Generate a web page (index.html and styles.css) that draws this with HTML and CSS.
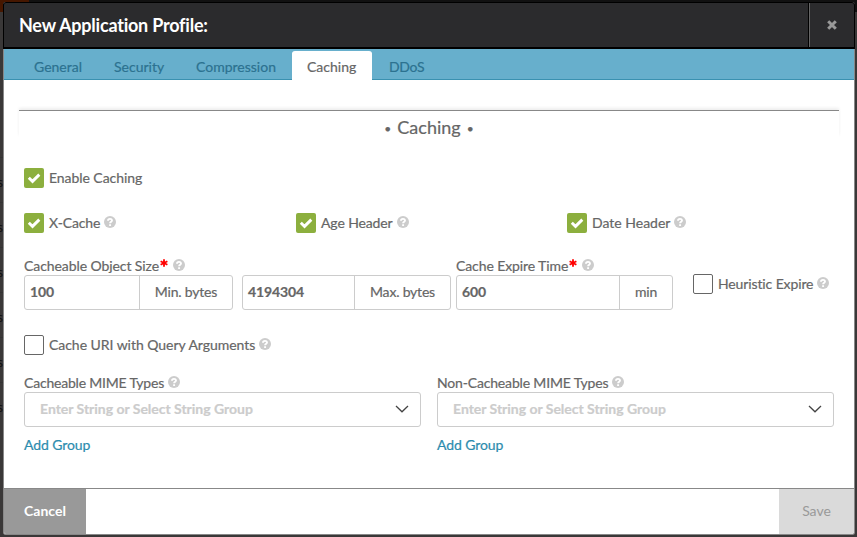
FILE: index.html
```html
<!DOCTYPE html>
<html lang="en">
<head>
<meta charset="utf-8">
<title>New Application Profile</title>
<link rel="stylesheet" href="styles.css">
</head>
<body>
<svg class="defs" aria-hidden="true">
  <symbol id="help" viewBox="0 0 12 12"><circle cx="6" cy="6" r="6" fill="#ccc"/><path d="M4 4.7C4 2.4 8 2.3 8 4.6C8 5.8 6.1 5.8 6.1 7.3M6.1 8.3V10" fill="none" stroke="#fff" stroke-width="1.9"/></symbol>
  <symbol id="check" viewBox="0 0 20 20"><path d="M4.8 9.8L8.5 13.4L15.3 6.6" fill="none" stroke="#fff" stroke-width="2.9"/></symbol>
  <symbol id="star" viewBox="0 0 8 8"><path d="M4 .3V7.7M.6 2.2L7.4 5.8M7.4 2.2L.6 5.8" stroke="#f00" stroke-width="1.8"/></symbol>
  <symbol id="chevron" viewBox="0 0 14 8"><path d="M1 1L7 6.8L13 1" fill="none" stroke="#444" stroke-width="1.3"/></symbol>
</svg>
<div class="backdrop"><div class="topstrip"></div><ul class="rows"><li>s</li><li>s</li><li>s</li><li>s</li><li>s</li><li>s</li></ul></div>
<div class="modal">
  <header class="header">
    <h1>New Application Profile:</h1>
    <button class="close" aria-label="Close"><svg width="10" height="10" viewBox="0 0 10 10"><path d="M1.2 1.2L8.8 8.8M8.8 1.2L1.2 8.8" stroke="#999" stroke-width="3"/></svg></button>
  </header>
  <nav class="tabs">
    <a class="tab general">General</a><a class="tab security">Security</a><a class="tab compression">Compression</a><a class="tab active">Caching</a><a class="tab ddos">DDoS</a>
  </nav>
  <main class="content">
    <div class="section"><h2><small>•</small>Caching<small>•</small></h2></div>
    <div class="check-row first"><label class="option"><i class="box on"><svg><use href="#check"/></svg></i><span class="enable">Enable Caching</span></label></div>
    <div class="check-row thirds">
      <label class="option"><i class="box on"><svg><use href="#check"/></svg></i><span class="xcache">X-Cache</span><svg class="help"><use href="#help"/></svg></label>
      <label class="option"><i class="box on"><svg><use href="#check"/></svg></i><span class="age">Age Header</span><svg class="help"><use href="#help"/></svg></label>
      <label class="option"><i class="box on"><svg><use href="#check"/></svg></i><span class="date">Date Header</span><svg class="help"><use href="#help"/></svg></label>
    </div>
    <div class="fields">
      <div class="field min"><div class="label"><span class="size">Cacheable Object Size</span><svg class="star"><use href="#star"/></svg><svg class="help"><use href="#help"/></svg></div><div class="input"><b>100</b><span class="unit minb">Min. bytes</span></div></div>
      <div class="field max"><div class="input"><b>4194304</b><span class="unit maxb">Max. bytes</span></div></div>
      <div class="field expire"><div class="label"><span class="time">Cache Expire Time</span><svg class="star"><use href="#star"/></svg><svg class="help"><use href="#help"/></svg></div><div class="input"><b>600</b><span class="unit">min</span></div></div>
      <label class="option heuristic"><i class="box"></i><span class="heur">Heuristic Expire</span><svg class="help"><use href="#help"/></svg></label>
    </div>
    <div class="check-row uri"><label class="option"><i class="box"></i><span class="query">Cache URI with Query Arguments</span><svg class="help"><use href="#help"/></svg></label></div>
    <div class="groups">
      <div class="group"><div class="label"><span class="mime">Cacheable MIME Types</span><svg class="help"><use href="#help"/></svg></div><div class="select"><span>Enter String or Select String Group</span><svg class="chevron"><use href="#chevron"/></svg></div><a class="add">Add Group</a></div>
      <div class="group"><div class="label"><span class="nonmime">Non-Cacheable MIME Types</span><svg class="help"><use href="#help"/></svg></div><div class="select"><span>Enter String or Select String Group</span><svg class="chevron"><use href="#chevron"/></svg></div><a class="add">Add Group</a></div>
    </div>
  </main>
  <footer class="footer"><button class="cancel">Cancel</button><button class="save">Save</button></footer>
</div>
</body>
</html>
```
FILE: styles.css
```css
* { box-sizing: border-box; }
body { margin: 0; width: 857px; height: 537px; overflow: hidden; background: #3a3838; font: 14px/20px Lato, "Liberation Sans", sans-serif; color: #666; position: relative; }
svg { display: block; flex: none; }
.defs { position: absolute; width: 0; height: 0; }
button { border: 0; padding: 0; font: inherit; }
span, h1, h2, a { white-space: nowrap; }
.backdrop { position: absolute; inset: 0; }
.topstrip { height: 12px; background: linear-gradient(90deg, #461700 29px, #111 29px); }
.rows { list-style: none; margin: 145px 0 0; padding: 0; width: 3px; overflow: hidden; color: #111; }
.rows li { height: 45px; line-height: 47px; margin-left: -3px; border-top: 1px solid #333; }
.modal { position: relative; margin: 2px 2px 0 3px; width: 852px; height: 533px; border: 1px solid #888; border-top: 0; border-radius: 3px; background: #fff; display: flex; flex-direction: column; }
.content, .tabs { -webkit-text-stroke: .2px; }
.header { height: 47px; margin: 0 -1px; background: #2b2b2d; border: 1px solid #000; border-bottom-width: 2px; border-radius: 3px 3px 0 0; display: flex; }
h1 { margin: 0; padding-left: 15px; font-size: 18px; font-weight: 700; line-height: 45px; letter-spacing: -.22px; color: #fff; flex: 1; }
.close { width: 46px; background: none; border-left: 1px solid #000; box-shadow: inset 1px 0 #666; display: flex; align-items: center; justify-content: center; }
.tabs { height: 31px; background: #67afcc; border-bottom: 1px solid #3a91b0; display: flex; align-items: flex-start; padding-left: 15px; }
.tab { height: 29px; margin-top: 2px; padding: 0 15px; line-height: 32px; color: #2c7290; border-radius: 3px 3px 0 0; }
.general { width: 80px; }
.security { width: 82px; }
.compression { width: 111px; }
.tab.active { width: 80px; background: #fff; color: #666; box-shadow: 0 1px #fff; }
.tab.ddos { padding-left: 17px; letter-spacing: -.3px; }
.content { flex: 1; padding: 30px 15px 0; }
.section { height: 27px; border-top: 1px solid #888; box-shadow: 0 -2px 3px #eee; }
h2 { margin: 0; height: 27px; font-size: 18px; line-height: 33px; font-weight: 400; display: flex; justify-content: center; gap: 6px; }
h2 small { font-size: 12px; line-height: 35px; }
.check-row { height: 20px; margin: 0 5px; }
.first { margin-top: 31px; }
.thirds { margin-top: 25px; display: grid; grid-template-columns: 272px 271px 1fr; }
.option { display: flex; align-items: center; height: 20px; }
.box { width: 20px; height: 20px; margin-right: 5px; border: 1px solid #666; border-radius: 2px; flex: none; }
.box.on { border: 0; background: #8caf3e; }
.box svg { width: 20px; height: 20px; }
.help { width: 12px; height: 12px; margin: -2px 0 0 4px; }
.enable { letter-spacing: -.06px; }
.xcache, .heur, .age { letter-spacing: -.12px; }
.size { letter-spacing: -.08px; }
.time { letter-spacing: -.1px; }
.query { letter-spacing: -.04px; }
.mime { letter-spacing: -.2px; }
.nonmime { letter-spacing: -.17px; }
.fields { display: flex; align-items: flex-end; height: 53px; margin: 24px 0 0 5px; }
.label { display: flex; align-items: center; height: 18px; }
.star { width: 8px; height: 8px; margin-top: -7px; margin-left: 1px; }
.star + .help { margin-left: 5px; }
.input { display: flex; height: 35px; border: 1px solid #ccc; border-radius: 3px; line-height: 32px; }
.input b { flex: 1; padding-left: 5px; letter-spacing: -.1px; }
.unit { width: 93px; border-left: 1px solid #ccc; text-align: center; letter-spacing: -.2px; }
.min { width: 209px; }
.max { width: 209px; margin-left: 9px; }
.max .unit { width: 96px; }
.expire { width: 217px; margin-left: 5px; }
.expire .unit { width: 53px; }
.heuristic { margin: 0 0 16px 20px; }
.uri { margin-top: 25px; }
.groups { display: flex; gap: 16px; margin: 19px 5px 0; }
.group { width: 397px; }
.select { height: 35px; padding: 0 11px 2px 15px; border: 1px solid #ccc; border-radius: 3px; display: flex; justify-content: space-between; align-items: center; color: #ccc; font-weight: 700; letter-spacing: -.02px; }
.chevron { width: 14px; height: 8px; }
.add { display: block; margin-top: 8px; color: #2d8cae; letter-spacing: -.1px; }
.footer { height: 46px; border-top: 1px solid #888; display: flex; justify-content: space-between; }
.cancel { width: 82px; padding-bottom: 2px; background: #999; color: #fff; font-weight: 700; border-radius: 0 0 0 2px; }
.save { width: 75px; padding-bottom: 2px; background: #dadada; color: #999; border-radius: 0 0 2px 0; }
```
